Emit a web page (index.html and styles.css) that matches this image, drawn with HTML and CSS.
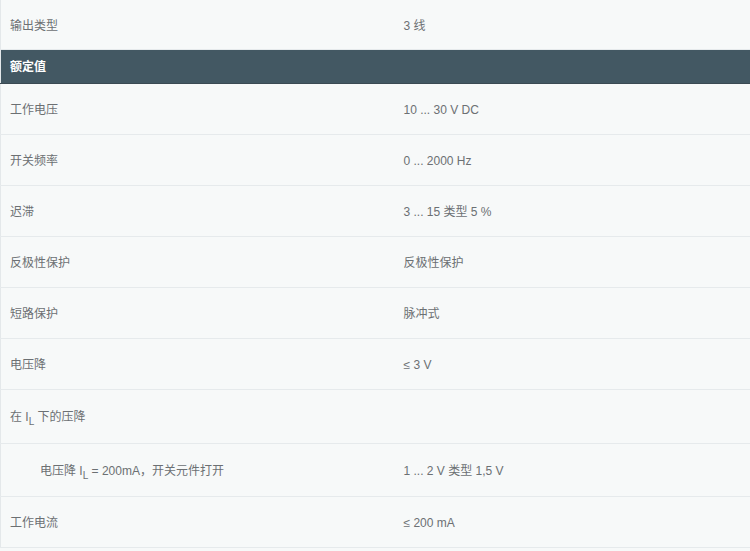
FILE: index.html
```html
<!DOCTYPE html>
<html lang="zh">
<head>
<meta charset="utf-8">
<link rel="stylesheet" href="styles.css">
</head>
<body>
<table class="spec">
  <colgroup><col class="col-label"><col class="col-value"></colgroup>
  <tbody>
    <tr class="row first"><td class="label">输出类型</td><td class="value">3 线</td></tr>
    <tr class="group"><td colspan="2">额定值</td></tr>
    <tr class="row"><td class="label">工作电压</td><td class="value">10 ... 30 V DC</td></tr>
    <tr class="row"><td class="label">开关频率</td><td class="value">0 ... 2000 Hz</td></tr>
    <tr class="row"><td class="label">迟滞</td><td class="value">3 ... 15 类型 5 %</td></tr>
    <tr class="row"><td class="label">反极性保护</td><td class="value">反极性保护</td></tr>
    <tr class="row"><td class="label">短路保护</td><td class="value">脉冲式</td></tr>
    <tr class="row"><td class="label">电压降</td><td class="value">≤ 3 V</td></tr>
    <tr class="row tall taller"><td class="label">在 I<sub>L</sub> 下的压降</td><td class="value"></td></tr>
    <tr class="row tall"><td class="label sub-label">电压降 I<sub>L</sub> = 200mA，开关元件打开</td><td class="value">1 ... 2 V 类型 1,5 V</td></tr>
    <tr class="row"><td class="label">工作电流</td><td class="value">≤ 200 mA</td></tr>
  </tbody>
</table>
</body>
</html>
```
FILE: styles.css
```css
html, body {
  margin: 0;
  padding: 0;
  background: #f7f9f9;
}
body {
  font-family: "Liberation Sans", Arial, "Noto Sans CJK SC", sans-serif;
  font-size: 12px;
  color: #6c7073;
}
.spec {
  width: 750px;
  table-layout: fixed;
  border-collapse: collapse;
  border-left: 1px solid #e4e8ea;
  background: #f7f9f9;
}
.col-label {
  width: 393px;
}
.spec td {
  padding: 17px 10px 15px;
  line-height: 18px;
  vertical-align: middle;
}
.spec td.label {
  padding-left: 9px;
}
.row td {
  border-bottom: 1px solid #e6eaec;
}
.row.first td {
  padding-top: 17px;
  padding-bottom: 14px;
}
.row.tall td {
  padding-top: 18px;
  padding-bottom: 16px;
}
.row.taller td {
  padding-top: 18px;
  padding-bottom: 17px;
}
.spec td.sub-label {
  padding-left: 39px;
}
sub {
  font-size: 10px;
  line-height: 0;
  vertical-align: -4px;
}
.group td {
  background: #435863;
  color: #ffffff;
  font-weight: bold;
  padding: 9px 10px 8px 9px;
  line-height: 16px;
  border-top: 1px solid #3b4a53;
  border-bottom: 1px solid #3b4a53;
}
```
